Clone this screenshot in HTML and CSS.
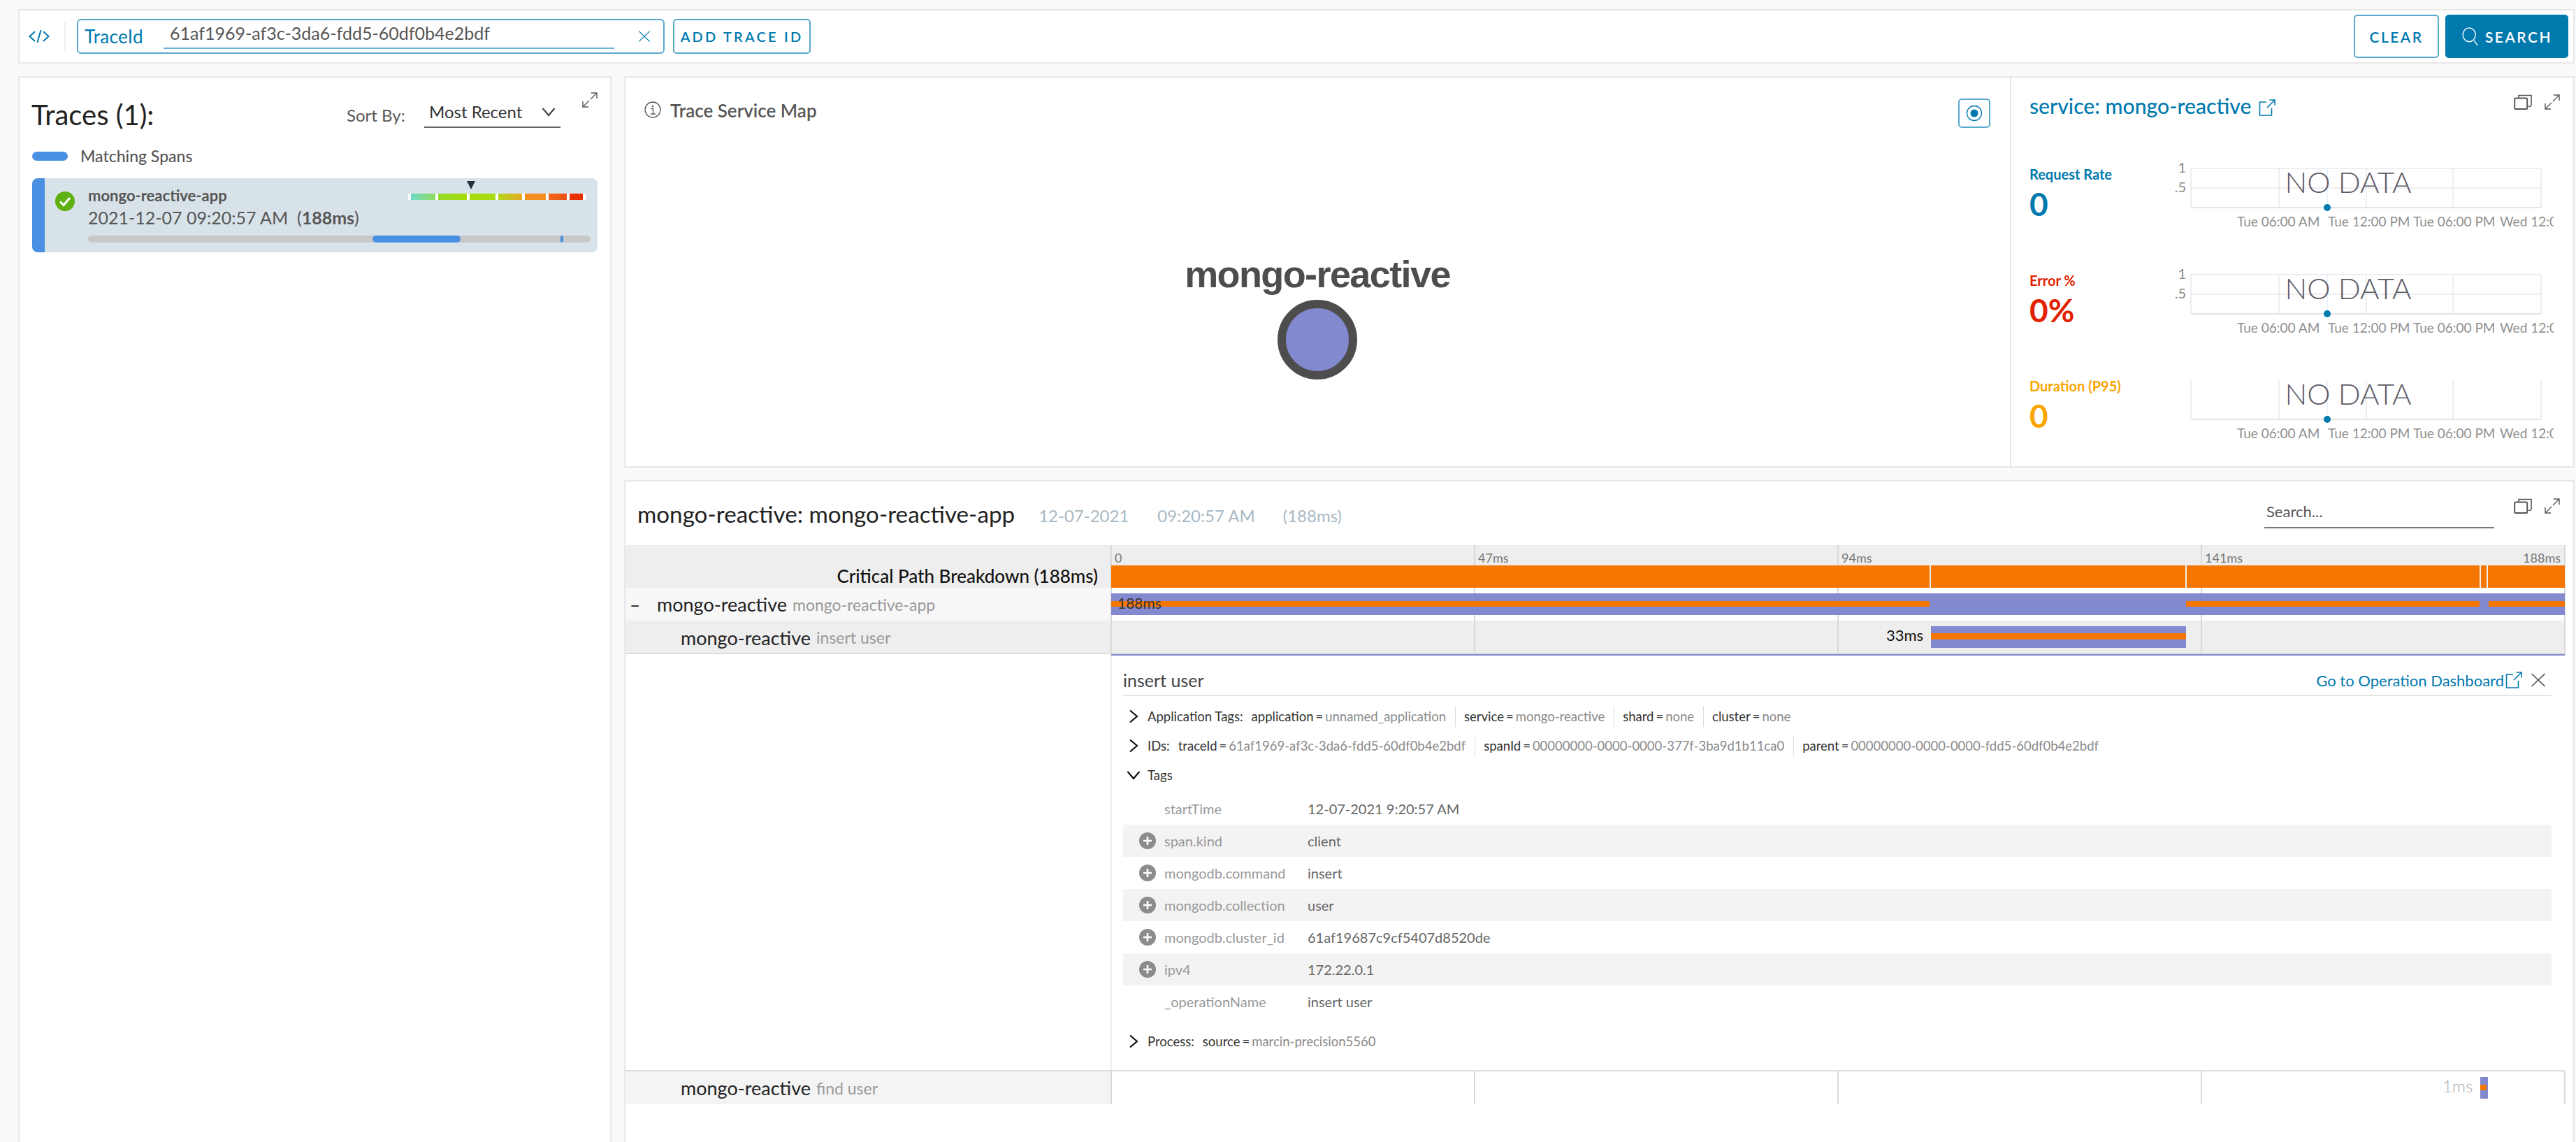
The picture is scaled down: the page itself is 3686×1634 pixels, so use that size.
FILE: index.html
```html
<!DOCTYPE html>
<html lang="en">
<head>
  <meta charset="utf-8" />
  <title>Traces</title>
  <link rel="stylesheet" href="styles.css">
</head>
<body>
<svg class="sprites" width="0" height="0">
  <symbol id="i-expand" viewBox="0 0 22 22"><path d="M13 1h8v8M21 1 12 10M1 13v8h8M1 21l9-9" fill="none" stroke="currentColor" stroke-width="1.4"/></symbol>
  <symbol id="i-copy" viewBox="0 0 26 22"><path d="M7 5V1.5h18V15l-1 2-3 .5" fill="none" stroke="currentColor" stroke-width="1.6"/><rect x="1.2" y="5.5" width="18" height="15.5" rx="1.5" fill="none" stroke="currentColor" stroke-width="2"/></symbol>
  <symbol id="i-ext" viewBox="0 0 24 24"><path d="M11 4H1.5v19h17V13M12 12 23 1M15.500 1H23v7.500" fill="none" stroke="currentColor" stroke-width="1.600"/></symbol>
  <symbol id="i-right" viewBox="0 0 14 20"><path d="M2 1.500 12 10 2 18.500" fill="none" stroke="#111" stroke-width="2.200"/></symbol>
  <symbol id="i-down" viewBox="0 0 20 14"><path d="M1.500 2 10 12l8.500-10" fill="none" stroke="currentColor" stroke-width="2.200"/></symbol>
  <symbol id="i-plus" viewBox="0 0 24 24"><circle cx="12" cy="12" r="12" fill="#8c8c8c"/><path d="M12 6v12M6 12h12" stroke="#fff" stroke-width="2.600"/></symbol>
  <symbol id="i-x" viewBox="0 0 22 20"><path d="M1.500 1 20.500 19M20.500 1 1.500 19" fill="none" stroke="currentColor" stroke-width="1.500"/></symbol>
</svg>

<div class="page">

  <!-- search bar -->
  <header class="topbar">
    <svg class="code-icon" viewBox="0 0 30 18"><path d="M9 2 1.500 9 9 16M21 2l7.500 7L21 16M17.500 0l-5 18" fill="none" stroke="#0079ad" stroke-width="2"/></svg>
    <div class="topbar-divider"></div>
    <div class="trace-input">
      <span class="trace-label">TraceId</span>
      <span class="trace-value">61af1969-af3c-3da6-fdd5-60df0b4e2bdf</span>
      <svg class="trace-clear"><use href="#i-x"/></svg>
    </div>
    <button class="btn btn-add">ADD TRACE ID</button>
    <button class="btn btn-clear">CLEAR</button>
    <button class="btn btn-search">
      <svg class="search-icon" viewBox="0 0 26 30"><ellipse cx="11.500" cy="12" rx="10" ry="11" fill="none" stroke="#fff" stroke-width="1.500"/><path d="M19 21l6 8" stroke="#fff" stroke-width="1.500"/></svg>
      SEARCH
    </button>
  </header>

  <div class="main">

    <!-- trace list -->
    <aside class="panel traces">
      <div class="traces-head">
        <h1 class="traces-title">Traces (1):</h1>
        <span class="sort-label">Sort By:</span>
        <div class="sort-select">Most Recent<svg class="sort-arrow"><use href="#i-down"/></svg></div>
        <svg class="icon-expand traces-expand"><use href="#i-expand"/></svg>
      </div>
      <div class="legend"><span class="legend-pill"></span>Matching Spans</div>
      <div class="trace-card">
        <svg class="check-icon" viewBox="0 0 28 28"><circle cx="14" cy="14" r="14" fill="#5fb012"/><path d="M7 14.500l5 5L21 9" fill="none" stroke="#fff" stroke-width="3"/></svg>
        <div class="card-body">
          <div class="card-top">
            <div class="card-name">mongo-reactive-app</div>
            <div class="heat">
              <i class="heat-mark"></i>
              <div class="heat-bar">
                <span class="h1"></span><span class="h2"></span><span class="h3"></span><span class="h4"></span><span class="h5"></span><span class="h6"></span><span class="h7"></span>
              </div>
            </div>
          </div>
          <div class="card-date">2021-12-07 09:20:57 AM &nbsp;(<b>188ms</b>)</div>
          <div class="card-track">
            <span class="card-span" style="left:56.6%;width:17.5%"></span>
            <span class="card-span" style="left:94%;width:4px"></span>
          </div>
        </div>
      </div>
    </aside>

    <div class="right">
      <section class="panel overview">
        <div class="map">
          <div class="map-head">
            <svg class="info-icon" viewBox="0 0 24 24"><circle cx="12" cy="12" r="11" fill="none" stroke="#565656" stroke-width="1.300"/><circle cx="12" cy="7" r="1.300" fill="#565656"/><path d="M9.500 10.500H12.500V18M9 18h7" fill="none" stroke="#565656" stroke-width="1.300"/></svg>
            <span class="map-title">Trace Service Map</span>
            <div class="map-btn"><svg viewBox="0 0 24 24"><circle cx="12" cy="12" r="10.500" fill="none" stroke="#0079ad" stroke-width="1.300"/><circle cx="12" cy="12" r="5.500" fill="#0079ad"/></svg></div>
          </div>
          <div class="node">
            <div class="node-label">mongo-reactive</div>
            <div class="node-dot"></div>
          </div>
        </div>

        <div class="service">
          <div class="service-head">
            <a class="service-title">service: mongo-reactive</a>
            <svg class="icon-ext"><use href="#i-ext"/></svg>
            <svg class="icon-copy"><use href="#i-copy"/></svg>
            <svg class="icon-expand"><use href="#i-expand"/></svg>
          </div>

          <div class="metric">
            <div class="metric-info rate">
              <div class="metric-name">Request Rate</div>
              <div class="metric-value">0</div>
            </div>
            <svg class="chart" viewBox="0 0 556 96">
              <path class="grid" d="M37 9H538M37 37H538M163 9V65M288 9V65M412 9V65M37 9V65M538 9V65"/>
              <path class="grid-thick" d="M37 65H538"/>
              <path class="grid-blue" d="M232 9V65"/>
              <circle cx="232" cy="65" r="5" fill="#0079ad"/>
              <text class="ylabel" x="30" y="15" text-anchor="end">1</text>
              <text class="ylabel" x="30" y="43" text-anchor="end">.5</text>
              <text class="nodata" x="262" y="44" text-anchor="middle">NO DATA</text>
              <text class="xlabel" x="103" y="92">Tue 06:00 AM</text>
              <text class="xlabel" x="233" y="92">Tue 12:00 PM</text>
              <text class="xlabel" x="355" y="92">Tue 06:00 PM</text>
              <text class="xlabel" x="479" y="92">Wed 12:00 AM</text>
            </svg>
          </div>

          <div class="metric">
            <div class="metric-info error">
              <div class="metric-name">Error %</div>
              <div class="metric-value">0%</div>
            </div>
            <svg class="chart" viewBox="0 0 556 96">
              <path class="grid" d="M37 9H538M37 37H538M163 9V65M288 9V65M412 9V65M37 9V65M538 9V65"/>
              <path class="grid-thick" d="M37 65H538"/>
              <path class="grid-blue" d="M232 9V65"/>
              <circle cx="232" cy="65" r="5" fill="#0079ad"/>
              <text class="ylabel" x="30" y="15" text-anchor="end">1</text>
              <text class="ylabel" x="30" y="43" text-anchor="end">.5</text>
              <text class="nodata" x="262" y="44" text-anchor="middle">NO DATA</text>
              <text class="xlabel" x="103" y="92">Tue 06:00 AM</text>
              <text class="xlabel" x="233" y="92">Tue 12:00 PM</text>
              <text class="xlabel" x="355" y="92">Tue 06:00 PM</text>
              <text class="xlabel" x="479" y="92">Wed 12:00 AM</text>
            </svg>
          </div>

          <div class="metric">
            <div class="metric-info duration">
              <div class="metric-name">Duration (P95)</div>
              <div class="metric-value">0</div>
            </div>
            <svg class="chart" viewBox="0 0 556 96">
              <path class="grid" d="M163 9V65M288 9V65M412 9V65M37 9V65M538 9V65"/>
              <path class="grid-thick" d="M37 65H538"/>
              <path class="grid-blue" d="M232 9V65"/>
              <circle cx="232" cy="65" r="5" fill="#0079ad"/>
              <text class="nodata" x="262" y="44" text-anchor="middle">NO DATA</text>
              <text class="xlabel" x="103" y="92">Tue 06:00 AM</text>
              <text class="xlabel" x="233" y="92">Tue 12:00 PM</text>
              <text class="xlabel" x="355" y="92">Tue 06:00 PM</text>
              <text class="xlabel" x="479" y="92">Wed 12:00 AM</text>
            </svg>
          </div>
        </div>
      </section>

      <!-- trace timeline -->
      <section class="panel timeline">
        <div class="tl-head">
          <span class="tl-title">mongo-reactive: mongo-reactive-app</span>
          <span class="tl-meta tl-date">12-07-2021</span>
          <span class="tl-meta tl-time">09:20:57 AM</span>
          <span class="tl-meta tl-dur">(188ms)</span>
          <div class="tl-search">Search...</div>
          <svg class="icon-copy"><use href="#i-copy"/></svg>
          <svg class="icon-expand"><use href="#i-expand"/></svg>
        </div>

        <div class="tl-table">
          <div class="tl-row row-head">
            <div class="tl-name crit-label">Critical Path Breakdown (188ms)</div>
            <div class="track">
              <i class="gl" style="left:0"></i><i class="gl" style="left:25%"></i><i class="gl" style="left:50%"></i><i class="gl" style="left:75%"></i><i class="gl" style="left:100%"></i>
              <div class="ticks">
                <span>0</span><span>47ms</span><span>94ms</span><span>141ms</span><span class="tick-end">188ms</span>
              </div>
              <div class="crit-bar">
                <span style="flex:1171"></span><span style="flex:364"></span><span style="flex:419"></span><span style="flex:8"></span><span style="flex:110"></span>
              </div>
            </div>
          </div>

          <div class="tl-row row-root">
            <div class="tl-name"><span class="collapse">–</span><span class="svc">mongo-reactive</span> <span class="op">mongo-reactive-app</span></div>
            <div class="track">
              <i class="gl" style="left:0"></i><i class="gl" style="left:25%"></i><i class="gl" style="left:50%"></i><i class="gl" style="left:75%"></i><i class="gl" style="left:100%"></i>
              <div class="span-bar" style="left:0;width:100%">
                <i class="crit" style="left:0;width:56.3%"></i><i class="crit" style="left:73.95%;width:20.2%"></i><i class="crit" style="left:94.75%;width:5.25%"></i>
                <span class="root-time">188ms</span>
              </div>
            </div>
          </div>

          <div class="tl-row row-sel">
            <div class="tl-name child"><span class="svc">mongo-reactive</span> <span class="op">insert user</span></div>
            <div class="track">
              <i class="gl" style="left:0"></i><i class="gl" style="left:25%"></i><i class="gl" style="left:50%"></i><i class="gl" style="left:75%"></i><i class="gl" style="left:100%"></i>
              <div class="span-bar" style="left:56.4%;width:17.55%">
                <i class="crit" style="left:0;width:100%"></i>
                <span class="span-time">33ms</span>
              </div>
            </div>
          </div>

          <div class="tl-detail">
            <div class="detail-head">
              <span class="detail-name">insert user</span>
              <a class="detail-link">Go to Operation Dashboard</a>
              <svg class="icon-ext"><use href="#i-ext"/></svg>
              <svg class="icon-x"><use href="#i-x"/></svg>
            </div>

            <div class="kv-row">
              <svg class="chev"><use href="#i-right"/></svg>
              <span class="kv-title">Application Tags:</span>
              <span class="kv"><b>application</b><s>=</s><em>unnamed_application</em></span>
              <span class="kv"><b>service</b><s>=</s><em>mongo-reactive</em></span>
              <span class="kv"><b>shard</b><s>=</s><em>none</em></span>
              <span class="kv kv-last"><b>cluster</b><s>=</s><em>none</em></span>
            </div>
            <div class="kv-row">
              <svg class="chev"><use href="#i-right"/></svg>
              <span class="kv-title">IDs:</span>
              <span class="kv"><b>traceId</b><s>=</s><em>61af1969-af3c-3da6-fdd5-60df0b4e2bdf</em></span>
              <span class="kv"><b>spanId</b><s>=</s><em>00000000-0000-0000-377f-3ba9d1b11ca0</em></span>
              <span class="kv kv-last"><b>parent</b><s>=</s><em>00000000-0000-0000-fdd5-60df0b4e2bdf</em></span>
            </div>
            <div class="kv-row">
              <svg class="chev-down"><use href="#i-down"/></svg>
              <span class="kv-title">Tags</span>
            </div>

            <div class="tags">
              <div class="tag-row"><span class="tag-key">startTime</span><span class="tag-val">12-07-2021 9:20:57 AM</span></div>
              <div class="tag-row"><svg class="plus"><use href="#i-plus"/></svg><span class="tag-key">span.kind</span><span class="tag-val">client</span></div>
              <div class="tag-row"><svg class="plus"><use href="#i-plus"/></svg><span class="tag-key">mongodb.command</span><span class="tag-val">insert</span></div>
              <div class="tag-row"><svg class="plus"><use href="#i-plus"/></svg><span class="tag-key">mongodb.collection</span><span class="tag-val">user</span></div>
              <div class="tag-row"><svg class="plus"><use href="#i-plus"/></svg><span class="tag-key">mongodb.cluster_id</span><span class="tag-val">61af19687c9cf5407d8520de</span></div>
              <div class="tag-row"><svg class="plus"><use href="#i-plus"/></svg><span class="tag-key">ipv4</span><span class="tag-val">172.22.0.1</span></div>
              <div class="tag-row"><span class="tag-key">_operationName</span><span class="tag-val">insert user</span></div>
            </div>

            <div class="kv-row process">
              <svg class="chev"><use href="#i-right"/></svg>
              <span class="kv-title">Process:</span>
              <span class="kv kv-last"><b>source</b><s>=</s><em>marcin-precision5560</em></span>
            </div>
          </div>

          <div class="tl-row row-last">
            <div class="tl-name child"><span class="svc">mongo-reactive</span> <span class="op">find user</span></div>
            <div class="track">
              <i class="gl" style="left:0"></i><i class="gl" style="left:25%"></i><i class="gl" style="left:50%"></i><i class="gl" style="left:75%"></i><i class="gl" style="left:100%"></i>
              <div class="span-bar" style="left:94.2%;width:11px">
                <i class="crit" style="left:0;width:9px"></i>
                <span class="span-time faded">1ms</span>
              </div>
            </div>
          </div>
        </div>
      </section>
    </div>
  </div>
</div>
</body>
</html>
```

FILE: styles.css
```css
*{
  box-sizing: border-box;
}
html, body{
  margin: 0;
  height: 100%;
}
body{
  background: #fafafa;
  font-family: Lato, "Noto Sans", sans-serif;
  color: #565656;
  overflow: hidden;
}
.sprites{
  position: absolute;
}
.page{
  height: 1644px;
  padding: 13px 2px 0 26px;
  display: flex;
  flex-direction: column;
  gap: 18px;
}
.panel{
  background: #fff;
  border: 2px solid #e8e8e8;
}

/* top bar */
.topbar{
  height: 78px;
  flex: none;
  display: flex;
  align-items: center;
  background: #fff;
  border: 2px solid #e8e8e8;
  padding: 0 7px 0 13px;
}
.code-icon{
  width: 30px;
  height: 18px;
}
.topbar-divider{
  width: 2px;
  height: 41px;
  background: #eee;
  margin: 0 16px 0 21px;
}
.trace-input{
  width: 841px;
  height: 50px;
  border: 2px solid #5aa9cd;
  border-radius: 6px;
  display: flex;
  align-items: center;
  padding-left: 9px;
  color: #0079ad;
  position: relative;
}
.trace-label{
  width: 113px;
  font-size: 26px;
  letter-spacing: .3px;
  color: #0079ad;
}
.trace-value{
  width: 645px;
  height: 40px;
  line-height: 34px;
  border-bottom: 2px solid #6fb4d3;
  padding-left: 9px;
  font-size: 25px;
  color: #565656;
  margin-top: -4px;
}
.trace-clear{
  width: 18px;
  height: 18px;
  margin-left: 34px;
}
.btn{
  font-family: inherit;
  font-weight: 600;
  letter-spacing: 2.5px;
  border-radius: 5px;
  background: #fff;
  color: #0079ad;
  border: 2px solid #5aa9cd;
  padding: 0;
}
.btn-add{
  width: 197px;
  height: 50px;
  margin-left: 12px;
  font-size: 20px;
  letter-spacing: 3.200px;
}
.btn-clear{
  width: 122px;
  height: 62px;
  margin-left: auto;
  font-size: 21px;
}
.btn-search{
  width: 176px;
  height: 62px;
  margin-left: 9px;
  background: #0079ad;
  border-color: #0079ad;
  color: #fff;
  font-size: 21px;
  display: flex;
  align-items: center;
  justify-content: center;
  gap: 9px;
}
.search-icon{
  width: 25px;
  height: 27px;
}

.main{
  flex: 1;
  display: flex;
  gap: 18px;
  min-height: 0;
}

/* traces list */
.traces{
  width: 849px;
  flex: none;
  padding: 0 18px;
}
.traces-head{
  display: flex;
  align-items: center;
  height: 74px;
  margin-top: 16px;
  position: relative;
}
.traces-title{
  margin: 0 0 0 -1px;
  font-size: 40px;
  font-weight: 400;
  color: #222;
  width: 451px;
}
.sort-label{
  font-size: 24px;
  width: 111px;
}
.sort-select{
  width: 195px;
  height: 44px;
  border-bottom: 2px solid #666;
  padding: 6px 0 0 7px;
  font-size: 24px;
  color: #333;
  position: relative;
  top: -3px;
}
.sort-arrow{
  width: 20px;
  height: 14px;
  color: #444;
  position: absolute;
  right: 7px;
  top: 14px;
}
.icon-expand{
  width: 22px;
  height: 22px;
  color: #565656;
  flex: none;
}
.traces-expand{
  position: absolute;
  right: 0;
  top: 5px;
}
.legend{
  display: flex;
  align-items: center;
  gap: 18px;
  font-size: 23px;
  font-weight: 500;
  line-height: 28px;
  margin-top: 8px;
}
.legend-pill{
  width: 51px;
  height: 13px;
  border-radius: 7px;
  background: #4a90e2;
}
.trace-card{
  margin-top: 18px;
  height: 106px;
  width: 809px;
  background: #d8e3e9;
  border-left: 18px solid #4a90e2;
  border-radius: 8px;
  display: flex;
  padding: 0 10px 0 15px;
}
.check-icon{
  width: 28px;
  height: 28px;
  margin-top: 19px;
  flex: none;
}
.card-body{
  flex: 1;
  margin-left: 19px;
  position: relative;
}
.card-top{
  display: flex;
  justify-content: space-between;
}
.card-name{
  font-size: 22px;
  font-weight: 700;
  line-height: 26px;
  margin-top: 12px;
}
.heat{
  position: relative;
  margin: 22px 7px 0 0;
}
.heat-mark{
  position: absolute;
  left: 84px;
  top: -18px;
  border-left: 6px solid transparent;
  border-right: 6px solid transparent;
  border-top: 12px solid #1f3440;
}
.heat-bar{
  display: flex;
  gap: 4px;
  height: 9px;
  padding: 0 4px;
  background: #fff;
  width: 254px;
}
.heat-bar span{
  display: block;
}
.h1{ width: 35px; background: linear-gradient(90deg, #6ed9ca, #8fdc60); }
.h2{ width: 42px; background: linear-gradient(90deg, #96d92a, #a6dc06); }
.h3{ width: 38px; background: #a9dc10; }
.h4{ width: 34px; background: linear-gradient(90deg, #b2d61c, #e8a824); }
.h5{ width: 30px; background: #f48e1e; }
.h6{ width: 27px; background: linear-gradient(90deg, #f26a1a, #e95010); }
.h7{ width: 19px; background: #e83000; }
.card-date{
  font-size: 25px;
  line-height: 32px;
  margin-top: 2px;
}
.card-date b{
  font-weight: 700;
}
.card-track{
  position: relative;
  height: 10px;
  width: 719px;
  background: #c8c8c8;
  border-radius: 5px;
  margin-top: 10px;
}
.card-span{
  position: absolute;
  top: 0;
  bottom: 0;
  background: #4a90e2;
  border-radius: 5px;
}

/* right side */
.right{
  flex: 1;
  display: flex;
  flex-direction: column;
  gap: 18px;
  min-width: 0;
}
.overview{
  height: 560px;
  flex: none;
  display: flex;
}
.map{
  width: 1983px;
  flex: none;
  border-right: 2px solid #e8e8e8;
  padding: 30px 28px 0 27px;
}
.map-head{
  display: flex;
  align-items: flex-start;
}
.info-icon{
  width: 24px;
  height: 24px;
  margin: 4px 13px 0 0;
}
.map-title{
  font-size: 26px;
  font-weight: 600;
  line-height: 34px;
  flex: 1;
}
.map-btn{
  width: 46px;
  height: 42px;
  border: 2px solid #5aa9cd;
  border-radius: 5px;
  display: flex;
  align-items: center;
  justify-content: center;
}
.map-btn svg{
  width: 24px;
  height: 26px;
}
.node{
  display: flex;
  flex-direction: column;
  align-items: center;
  margin-top: 179px;
}
.node-label{
  font-family: "Liberation Sans", Arial, sans-serif;
  font-weight: 700;
  font-size: 54px;
  letter-spacing: -1.600px;
  line-height: 60px;
  color: #4d4d4d;
}
.node-dot{
  width: 114px;
  height: 114px;
  border-radius: 50%;
  border: 12px solid #4d4d4d;
  background: #8389cf;
  margin-top: 7px;
}

.service{
  flex: 1;
  padding: 20px 19px 0 26px;
}
.service-head{
  display: flex;
  align-items: flex-start;
  height: 42px;
}
.service-title{
  font-size: 30.200px;
  line-height: 40px;
  font-weight: 500;
  color: #0079ad;
}
.icon-ext{
  width: 24px;
  height: 24px;
  color: #0079ad;
  flex: none;
}
.service-head .icon-ext{
  margin: 11px auto 0 10px;
}
.icon-copy{
  width: 26px;
  height: 22px;
  color: #565656;
  flex: none;
}
.service-head .icon-copy{
  margin: 4px 18px 0 0;
}
.service-head .icon-expand{
  margin-top: 4px;
}
.metric{
  display: flex;
  height: 152px;
  margin-top: 0;
}
.service-head + .metric{
  margin-top: 59px;
}
.metric + .metric + .metric{
  margin-top: -1px;
}
.metric-info{
  width: 194px;
  flex: none;
  padding-top: 5px;
}
.metric-name{
  font-size: 20px;
  font-weight: 700;
  line-height: 24px;
}
.metric-value{
  font-size: 46px;
  font-weight: 700;
  line-height: 46px;
  margin-top: 8px;
}
.rate{ color: #0079ad; }
.error{ color: #e12200; }
.duration{ color: #fba500; }
.chart{
  width: 556px;
  height: 96px;
  flex: none;
  overflow: hidden;
}
.grid{
  fill: none;
  stroke: #e9e9ec;
  stroke-width: 1.500;
}
.grid-thick{
  fill: none;
  stroke: #e4e4e6;
  stroke-width: 2;
}
.grid-blue{
  fill: none;
  stroke: #d7e8f2;
  stroke-width: 1;
}
.ylabel{
  font-size: 20px;
  fill: #8a8a8a;
}
.xlabel{
  font-size: 19px;
  fill: #8f8f8f;
}
.nodata{
  font-size: 42px;
  font-weight: 300;
  fill: #5e5b68;
}

/* timeline */
.timeline{
  flex: 1;
  min-height: 0;
  overflow: hidden;
}
.tl-head{
  display: flex;
  align-items: flex-start;
  height: 91px;
  padding: 26px 19px 0 17px;
}
.tl-title{
  font-size: 33.200px;
  line-height: 40px;
  color: #222;
}
.tl-meta{
  font-size: 24px;
  line-height: 40px;
  color: #a9b9c5;
  margin-top: 3px;
}
.tl-date{ margin-left: 34px; }
.tl-time{ margin-left: 41px; }
.tl-dur{ margin-left: 40px; }
.tl-search{
  width: 329px;
  height: 41px;
  border-bottom: 2px solid #777;
  margin-left: auto;
  padding: 3px 0 0 3px;
  font-size: 22px;
  color: #565656;
}
.tl-head .icon-copy{
  margin: -2px 18px 0 28px;
}
.tl-head .icon-expand{
  margin-top: -2px;
}

.tl-table{
  width: 2775px;
  font-size: 26px;
}
.tl-row{
  display: grid;
  grid-template-columns: 695px 2080px;
}
.row-head{
  height: 61px;
  background: #eee;
}
.row-root{
  height: 47px;
}
.row-root .tl-name{
  background: #f7f7f7;
}
.row-sel{
  height: 48px;
  background: #eee;
  border-bottom: 2px solid #ddd;
}
.row-sel .track{
  box-shadow: 0 2px 0 #8389cf;
  height: 48px;
}
.row-last{
  height: 49px;
  border-top: 2px solid #ddd;
}
.row-last .tl-name{
  background: #f4f4f4;
}
.tl-name{
  display: flex;
  align-items: center;
  white-space: nowrap;
  gap: 8px;
}
.crit-label{
  justify-content: flex-end;
  align-items: flex-end;
  padding: 0 19px 1px 0;
  font-weight: 500;
  color: #111;
}
.child{
  padding-left: 79px;
}
.collapse{
  width: 45px;
  padding-left: 6px;
  margin-right: -8px;
  color: #222;
}
.svc{
  color: #222;
  font-size: 27px;
}
.op{
  color: #999;
  font-size: 23px;
}
.track{
  position: relative;
}
.gl{
  position: absolute;
  top: 0;
  bottom: 0;
  width: 2px;
  margin-left: -1px;
  background: #d8d8d8;
}
.ticks{
  display: flex;
  height: 29px;
  line-height: 36px;
  font-size: 18px;
  color: #777;
  position: relative;
}
.ticks span{
  width: 25%;
  padding-left: 5px;
}
.ticks .tick-end{
  position: absolute;
  right: 6px;
  width: auto;
}
.crit-bar{
  position: relative;
  display: flex;
  gap: 2px;
  height: 32px;
}
.crit-bar span{
  background: #f57600;
}
.span-bar{
  position: absolute;
  top: 8px;
  height: 31px;
  background: #8389cf;
}
.crit{
  position: absolute;
  top: 11px;
  height: 8px;
  background: #f57600;
}
.row-sel .crit{
  top: 10px;
  height: 9px;
}
.root-time{
  position: absolute;
  left: 9px;
  top: 0;
  font-size: 21px;
  line-height: 28px;
  color: #333;
}
.span-time{
  position: absolute;
  right: 100%;
  margin-right: 11px;
  top: -2px;
  font-size: 22px;
  line-height: 30px;
  color: #111;
}
.faded{
  color: #aaa;
  font-weight: 300;
  font-size: 24px;
}

/* span details */
.tl-detail{
  margin-left: 694px;
  height: 595px;
  border-left: 2px solid #eee;
  padding: 0 19px 0 16px;
  font-size: 18.500px;
}
.detail-head{
  display: flex;
  align-items: center;
  height: 60px;
  padding-top: 16px;
  border-bottom: 2px solid #e5e5e5;
  margin-bottom: 8px;
}
.detail-name{
  font-size: 25px;
  color: #444;
  flex: 1;
}
.detail-link{
  font-size: 22px;
  color: #0079ad;
}
.detail-head .icon-ext{
  margin-left: 2px;
}
.icon-x{
  width: 22px;
  height: 20px;
  color: #444;
  margin: 0 8px 0 12px;
}
.kv-row{
  display: flex;
  align-items: center;
  height: 42px;
  white-space: nowrap;
  color: #333;
}
.chev{
  width: 14px;
  height: 20px;
  margin: 0 13px 0 8px;
}
.chev-down{
  width: 20px;
  height: 14px;
  margin: 0 10px 0 5px;
  color: #111;
}
.kv-title{
  margin-right: 12px;
}
.kv{
  border-right: 1px solid #ddd;
  padding-right: 13px;
  margin-right: 12px;
  line-height: 30px;
}
.kv-last{
  border-right: 0;
}
.kv b{
  font-weight: 400;
  color: #333;
}
.kv s{
  text-decoration: none;
  color: #333;
  margin: 0 3px;
}
.kv em{
  font-style: normal;
  color: #8a8a8a;
}
.tags{
  margin-top: 4px;
}
.tag-row{
  display: flex;
  align-items: center;
  height: 46px;
  padding-left: 59px;
  position: relative;
  font-size: 20px;
}
.tag-row:nth-child(even){
  background: #f3f3f3;
}
.plus{
  position: absolute;
  left: 23px;
  top: 11px;
  width: 24px;
  height: 24px;
}
.tag-key{
  width: 205px;
  color: #999;
}
.tag-val{
  color: #666;
}
.process{
  margin-top: 13px;
}
```
